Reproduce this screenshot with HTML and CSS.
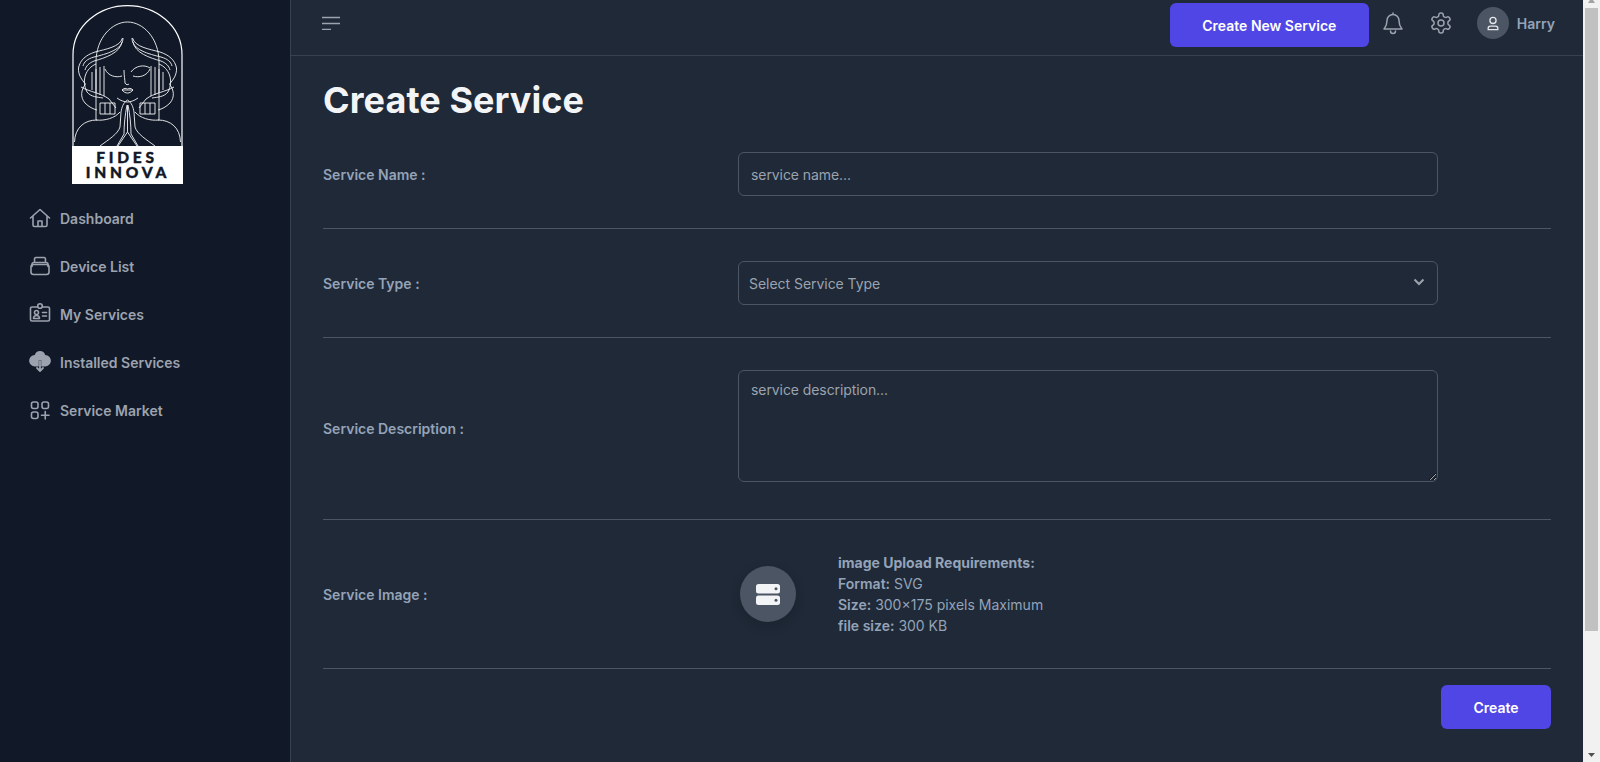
FILE: index.html
```html
<!DOCTYPE html>
<html lang="en">
<head>
    <meta charset="UTF-8">
    <title>Create Service</title>
    <link rel="stylesheet" href="styles.css">
</head>
<body>
<div class="window">
<div class="app">
    <!-- sidebar -->
    <aside class="sidebar">
        <div class="logo">
            <svg class="logo-svg" viewBox="72 5 111 179" width="111" height="179">
                <defs>
                    <g id="half" fill="none" stroke="#f3f4f6" stroke-width="0.9">
                        <path d="M122.500 38C120 47 106 49 95 52C86 55 80 60 78.500 68C78 75 82 80 85.500 84C81 90 80 97 85 103C89 107 93 109 97 110"/>
                        <path d="M123 38C123 50 106 54 94 57C87 59 84 62 83 66"/>
                        <path d="M122 42C120 53 105 58 94 61C89 63 86 66 85 70"/>
                        <path d="M96 64C86 68 81 80 87 92C91 97 97 97 103 98"/>
                        <path d="M92 72V90M96 69V93M100 67V95M104 66V96"/>
                        <path d="M81 87C90 92 101 93 109 99L116 108"/>
                        <path d="M100 103H115V114H100ZM105 103V114M110 103V114"/>
                        <path d="M96 120C105 121 115 118 120 112"/>
                        <path d="M74.500 142C75 128 84 120 97 120"/>
                        <path d="M127.500 100C123 103 122 107 121 112L120 127C118 134 108 140 100 146"/>
                        <path d="M127 105C125 115 124 125 124 134L117 146"/>
                        <path d="M105 69C108 76 116 78 122 76"/>
                    </g>
                </defs>
                <path class="logo-arch" d="M73 146V55C73 25 100 5.600 127.500 5.600C155 5.600 182 25 182 55V146"/>
                <path d="M96 120V62C96 38 112 22 127.500 22C143 22 159 38 159 62V120" fill="none" stroke="#f3f4f6" stroke-width="0.9"/>
                <use href="#half"/>
                <use href="#half" transform="translate(255 0) scale(-1 1)"/>
                <path d="M124 70C124 76 125 80 125 83C126 85 128 85 129 84M122 90C124 88 126 88 127.500 89C129 88 131 88 133 90C130 94 125 94 122 90ZM122 90H133M117 98C121 101 125 102 127.500 102C130 102 134 101 138 98M127.500 105V132M127.500 132L118 146M127.500 132L137 146M131 72C135 66 144 64 150 68" fill="none" stroke="#f3f4f6" stroke-width="0.9"/>
                <rect x="72" y="146" width="111" height="38" fill="#fff"/>
                <text class="logo-text" x="127" y="162.500" text-anchor="middle">FIDES</text>
                <text class="logo-text" x="128" y="177.500" text-anchor="middle">INNOVA</text>
            </svg>
        </div>
        <ul class="nav">
            <li class="nav-item">
                <svg class="nav-icon" viewBox="0 0 20 20"><path d="M.5 10L10 1.500l9.500 8.500M3 8v9a1.500 1.500 0 0 0 1.500 1.500h11A1.500 1.500 0 0 0 17 17V8M8 18.500v-5.500h4v5.500"/></svg>
                <span>Dashboard</span>
            </li>
            <li class="nav-item">
                <svg class="nav-icon" viewBox="0 0 20 20"><rect x="1" y="8.500" width="18" height="10" rx="2.500"/><path d="M2 10.500V8.500c0-1 .8-2 2-2h12c1.200 0 2 1 2 2v2M4.500 6.500V3.500c0-1 .8-2 1.500-2h8c.7 0 1.500 1 1.500 2v3"/></svg>
                <span>Device List</span>
            </li>
            <li class="nav-item">
                <svg class="nav-icon" viewBox="0 0 20 20"><path d="M7.700 3H2A1.500 1.500 0 0 0 .5 4.500v11A1.500 1.500 0 0 0 2 17h16a1.500 1.500 0 0 0 1.500-1.500v-11A1.500 1.500 0 0 0 18 3h-5.700"/><circle cx="10" cy="2" r="2.300"/><circle cx="6.500" cy="8.500" r="2"/><path d="M3.500 14.500c0-2 1.300-3 3-3s3 1 3 3zM12.500 8.500h4M12.500 12h4"/></svg>
                <span>My Services</span>
            </li>
            <li class="nav-item">
                <svg class="nav-icon" viewBox="0 0 20 20"><path class="icon-fill" d="M10-1a5.500 5.500 0 0 1 5.200 3.900A5.300 5.300 0 0 1 15 14.500H11.200V8H8.800V14.500H5A5.300 5.300 0 0 1 4.800 2.900 5.500 5.500 0 0 1 10-1Z"/><path d="M10 9v10M7 16l3 3 3-3" stroke-width="1.800"/></svg>
                <span>Installed Services</span>
            </li>
            <li class="nav-item">
                <svg class="nav-icon" viewBox="0 0 20 20"><rect x="1.500" y="2" width="6.500" height="6.500" rx="2"/><rect x="12" y="2" width="6.500" height="6.500" rx="2"/><rect x="1.500" y="12" width="6.500" height="6.500" rx="2"/><path d="M15.250 11.500v7.500M11.500 15.250h7.500"/></svg>
                <span>Service Market</span>
            </li>
        </ul>
    </aside>

    <main class="main">
        <!-- top bar -->
        <header class="topbar">
            <svg class="menu-icon" viewBox="0 0 18 14" width="18" height="14"><path d="M0 1.500H18M0 7.500H18M0 13.500H9"/></svg>
            <div class="topbar-right">
                <button class="btn btn-new">Create New Service</button>
                <svg class="top-icon bell" viewBox="0 0 24 24"><path d="M18 9.500a6 6 0 0 0-12 0c0 6-3 8-3 8.500h18c0-.5-3-2.500-3-8.500M12 3.500V2M14.500 20a2.500 2.500 0 0 1-5 0"/></svg>
                <svg class="top-icon gear" viewBox="0 0 24 24"><path d="M12.220 2h-.44a2 2 0 0 0-2 2v.18a2 2 0 0 1-1 1.730l-.43.250a2 2 0 0 1-2 0l-.15-.08a2 2 0 0 0-2.730.730l-.22.380a2 2 0 0 0 .730 2.730l.15.1a2 2 0 0 1 1 1.720v.51a2 2 0 0 1-1 1.740l-.15.09a2 2 0 0 0-.730 2.730l.22.380a2 2 0 0 0 2.730.730l.15-.08a2 2 0 0 1 2 0l.43.250a2 2 0 0 1 1 1.730V20a2 2 0 0 0 2 2h.44a2 2 0 0 0 2-2v-.18a2 2 0 0 1 1-1.730l.43-.250a2 2 0 0 1 2 0l.15.08a2 2 0 0 0 2.730-.730l.22-.39a2 2 0 0 0-.730-2.730l-.15-.08a2 2 0 0 1-1-1.740v-.5a2 2 0 0 1 1-1.740l.15-.09a2 2 0 0 0 .730-2.730l-.22-.380a2 2 0 0 0-2.730-.730l-.15.08a2 2 0 0 1-2 0l-.43-.250a2 2 0 0 1-1-1.730V4a2 2 0 0 0-2-2z"/><circle cx="12" cy="12" r="3"/></svg>
                <div class="user">
                    <span class="avatar">
                        <svg viewBox="0 0 16 16" width="14" height="15"><circle cx="8" cy="4.500" r="3.500"/><path d="M2.500 15v-1.500c0-1.500 1-2.500 2.500-2.500h6c1.500 0 2.500 1 2.500 2.500V15z"/></svg>
                    </span>
                    <span class="user-name">Harry</span>
                </div>
            </div>
        </header>

        <section class="content">
            <h1 class="title">Create Service</h1>

            <div class="row">
                <label class="row-label">Service Name :</label>
                <input class="field" type="text" placeholder="service name...">
            </div>

            <div class="row">
                <label class="row-label">Service Type :</label>
                <div class="select-wrap">
                    <select class="field field-select">
                        <option>Select Service Type</option>
                    </select>
                    <svg class="select-arrow" viewBox="0 0 12 8" width="12" height="8"><path d="M1.500 1.500L6 6l4.500-4.500"/></svg>
                </div>
            </div>

            <div class="row">
                <label class="row-label">Service Description :</label>
                <textarea class="field field-area" placeholder="service description..."></textarea>
            </div>

            <div class="row">
                <label class="row-label">Service Image :</label>
                <div class="upload">
                    <div class="upload-circle">
                        <svg viewBox="0 0 24 21" width="24" height="21">
                            <rect width="24" height="9.500" rx="2.500" fill="#f3f4f6"/>
                            <rect y="11.500" width="24" height="9.500" rx="2.500" fill="#f3f4f6"/>
                            <circle cx="20" cy="4.750" r="1.500" fill="#4b5563"/>
                            <circle cx="20" cy="16.250" r="1.500" fill="#4b5563"/>
                        </svg>
                    </div>
                    <div class="upload-info">
                        <p class="upload-head">image Upload Requirements:</p>
                        <p><b>Format:</b> SVG</p>
                        <p><b>Size:</b> 300×175 pixels Maximum</p>
                        <p><b>file size:</b> 300 KB</p>
                    </div>
                </div>
            </div>

            <div class="actions">
                <button class="btn btn-create">Create</button>
            </div>
        </section>
    </main>
</div>
<!-- scrollbar of the page as it shows in the screenshot -->
<div class="scrollbar">
    <svg class="scroll-up" viewBox="0 0 13 3" width="13" height="3"><path d="M3 3L5 0H8L10 3Z"/></svg>
    <div class="scroll-thumb"></div>
    <svg class="scroll-down" viewBox="0 0 13 4" width="13" height="4"><path d="M3 0H10L6.500 4Z"/></svg>
</div>
</div>
</body>
</html>
```

FILE: styles.css
```css
*{
    margin: 0;
    padding: 0;
    box-sizing: border-box;
    list-style-type: none;
}
body{
    font-family: Inter, "Liberation Sans", sans-serif;
    font-size: 14px;
    background: #1f2937;
    color: #9ca3af;
}
/*layout*/
.window{
    display: flex;
    height: 100vh;
    overflow: hidden;
}
.app{
    flex: 1;
    min-width: 0;
    display: flex;
}
.sidebar{
    width: 291px;
    flex-shrink: 0;
    background: #111827;
    border-right: 1px solid #374151;
}
.main{
    flex: 1;
    min-width: 0;
}
/*scrollbar*/
.scrollbar{
    width: 17px;
    flex-shrink: 0;
    display: flex;
    flex-direction: column;
    padding: 0 2px 5px;
    background: #f1f1f1;
}
.scroll-up{
    fill: #a3a3a3;
    margin-bottom: 5px;
}
.scroll-thumb{
    height: 623px;
    background: #c1c1c1;
}
.scroll-down{
    fill: #505050;
    margin-top: auto;
}
/*logo*/
.logo{
    padding: 5px 0 0 72px;
    height: 194px;
}
.logo-svg{
    display: block;
}
.logo-arch{
    fill: none;
    stroke: #fff;
    stroke-width: 1.200;
}
.logo-text{
    font-family: Lato, "Liberation Sans", sans-serif;
    font-weight: 900;
    font-size: 15.500px;
    letter-spacing: 3.800px;
    fill: #111827;
    stroke: #111827;
    stroke-width: 0.400;
}
/*nav*/
.nav-item{
    display: flex;
    align-items: center;
    height: 48px;
    padding-left: 30px;
    gap: 10px;
    font-weight: 600;
    color: #9ca3af;
}
.nav-icon{
    width: 20px;
    height: 20px;
    flex-shrink: 0;
    overflow: visible;
    fill: none;
    stroke: #9ca3af;
    stroke-width: 1.600;
    stroke-linecap: round;
    stroke-linejoin: round;
}
.icon-fill{
    fill: #9ca3af;
    stroke: none;
}
/*top bar*/
.topbar{
    display: flex;
    justify-content: space-between;
    height: 56px;
    padding: 0 28px 0 31px;
    border-bottom: 1px solid #374151;
}
.menu-icon{
    fill: none;
    stroke: #9ca3af;
    stroke-width: 1.500;
    margin-top: 16px;
}
.topbar-right{
    display: flex;
    align-items: center;
    align-self: flex-start;
    height: 46px;
}
.btn{
    font-family: inherit;
    font-size: 14px;
    font-weight: 600;
    color: #fff;
    background: #4f46e5;
    border: none;
    border-radius: 6px;
    height: 44px;
}
.btn-new{
    width: 199px;
    margin-top: 4px;
}
.top-icon{
    width: 24px;
    height: 24px;
    fill: none;
    stroke: #9ca3af;
    stroke-width: 1.500;
    stroke-linecap: round;
    stroke-linejoin: round;
}
.bell{
    margin-left: 12px;
}
.gear{
    margin-left: 24px;
}
.user{
    display: flex;
    align-items: center;
    gap: 8px;
    margin-left: 24px;
}
.avatar{
    width: 32px;
    height: 32px;
    border-radius: 50%;
    background: #4b5563;
    display: flex;
    align-items: center;
    justify-content: center;
}
.avatar svg{
    fill: none;
    stroke: #e5e7eb;
    stroke-width: 1.500;
    overflow: visible;
}
.user-name{
    font-weight: 600;
    color: #94a3b8;
}
/*form*/
.content{
    padding: 0 32px;
}
.title{
    font-size: 36px;
    line-height: 40px;
    font-weight: 700;
    letter-spacing: .07px;
    color: #f3f4f6;
    padding-top: 24px;
}
.row{
    display: flex;
    align-items: center;
    padding: 32px 0;
    border-bottom: 1px solid #4b5563;
}
.row-label{
    width: 415px;
    flex-shrink: 0;
    font-weight: 600;
    color: #94a3b8;
}
.field{
    display: block;
    width: 700px;
    height: 44px;
    padding: 0 12px;
    font-family: inherit;
    font-size: 14px;
    letter-spacing: -.08px;
    color: #9ca3af;
    background: transparent;
    border: 1px solid #4b5563;
    border-radius: 6px;
    outline: none;
}
.field::placeholder{
    color: #9ca3af;
    opacity: 1;
}
.select-wrap{
    position: relative;
    width: 700px;
}
.field-select{
    appearance: none;
    padding: 0 10px;
    letter-spacing: -.04px;
}
.select-arrow{
    position: absolute;
    right: 13px;
    top: 17px;
    fill: none;
    stroke: #9ca3af;
    stroke-width: 2;
}
.field-area{
    height: 112px;
    padding: 9px 12px;
    margin-bottom: 5px;
    line-height: 20px;
}
.upload{
    display: flex;
    align-items: center;
    padding-left: 2px;
}
.upload-circle{
    width: 56px;
    height: 56px;
    border-radius: 50%;
    background: #4b5563;
    box-shadow: 0 4px 12px rgba(0,0,0,.15);
    display: flex;
    align-items: center;
    justify-content: center;
    margin-right: 42px;
}
.upload-info{
    line-height: 21px;
    color: #94a3b8;
}
.upload-info b{
    font-weight: 600;
}
.upload-head{
    font-weight: 700;
}
.actions{
    display: flex;
    justify-content: flex-end;
    padding-top: 16px;
}
.btn-create{
    width: 110px;
}
```
